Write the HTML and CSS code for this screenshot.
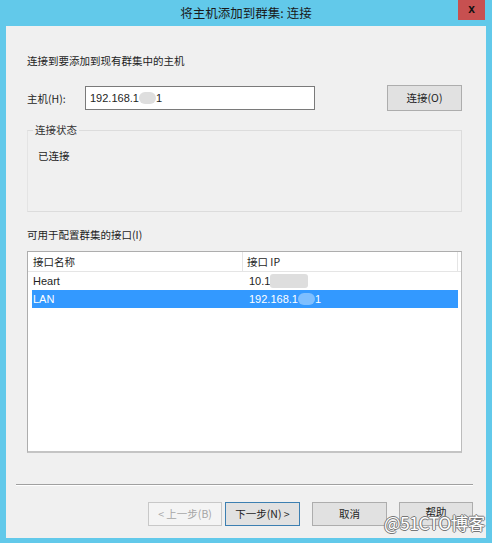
FILE: index.html
```html
<!DOCTYPE html>
<html lang="zh-CN">
<head>
<meta charset="UTF-8">
<title>将主机添加到群集: 连接</title>
<link rel="stylesheet" href="styles.css">
</head>
<body>
    <div class="window">
        <div class="title-bar">
            <div class="title">将主机添加到群集: 连接</div>
            <div class="close-btn">x</div>
        </div>
        <div class="client">
            <div class="content">
                <div class="intro">连接到要添加到现有群集中的主机</div>
                <div class="host-row">
                    <div class="host-label">主机(H):</div>
                    <div class="text-box">192.168.1<span class="blur"></span>1</div>
                    <div class="btn connect-btn">连接(O)</div>
                </div>
                <div class="group-box">
                    <div class="group-title">连接状态</div>
                    <div class="group-text">已连接</div>
                </div>
                <div class="list-label">可用于配置群集的接口(I)</div>
                <div class="list-view">
                    <div class="list-header">
                        <div class="col col-name">接口名称</div>
                        <div class="col col-ip">接口 IP</div>
                    </div>
                    <div class="list-row">
                        <div class="cell-name">Heart</div>
                        <div class="cell-ip">10.1<span class="blur wide"></span></div>
                    </div>
                    <div class="list-row selected">
                        <div class="cell-name">LAN</div>
                        <div class="cell-ip">192.168.1<span class="blur"></span>1</div>
                    </div>
                </div>
            </div>
            <div class="separator"></div>
            <div class="button-row">
                <div class="btn disabled">&lt; 上一步(B)</div>
                <div class="btn default-btn">下一步(N) &gt;</div>
                <div class="btn cancel-btn">取消</div>
                <div class="btn help-btn">帮助</div>
            </div>
        </div>
        <div class="watermark">@51CTO博客</div>
    </div>
</body>
</html>
```
FILE: styles.css
```css
body {
    margin: 0;
    font-family: "Noto Sans CJK SC", "Liberation Sans", sans-serif;
    font-size: 10.5px;
    color: #1e1e1e;
}
.window {
    position: relative;
    width: 492px;
    height: 543px;
    background-color: #62c9ea;
    padding: 0 6px;
    box-sizing: border-box;
}
.title-bar {
    height: 26px;
    display: flex;
    justify-content: center;
    align-items: center;
    position: relative;
}
.title {
    font-size: 12.5px;
    color: #1a1a1a;
    margin-top: -1px;
}
.close-btn {
    position: absolute;
    right: 1px;
    top: 0;
    width: 27px;
    height: 20px;
    background-color: #c75050;
    color: #111;
    font-family: "Liberation Sans", sans-serif;
    font-weight: bold;
    font-size: 12px;
    line-height: 18px;
    text-align: center;
}
.client {
    background-color: #f0f0f0;
    height: 512px;
    overflow: hidden;
}
.content {
    padding: 0 24px 0 21px;
}
.intro {
    margin-top: 28px;
    line-height: 14px;
}
.host-row {
    display: flex;
    align-items: center;
    margin-top: 17px;
    height: 26px;
}
.host-label {
    width: 58px;
}
.text-box {
    width: 230px;
    height: 24px;
    box-sizing: border-box;
    border: 1px solid #7a7a7a;
    background-color: #fff;
    padding-left: 4px;
    line-height: 22px;
    font-family: "Liberation Sans", sans-serif;
    font-size: 11px;
}
.blur {
    display: inline-block;
    width: 17px;
    height: 12px;
    border-radius: 6px;
    background-color: #dedede;
    vertical-align: -2px;
}
.blur.wide {
    width: 38px;
    border-radius: 3px;
    height: 14px;
    vertical-align: -3px;
}
.btn {
    height: 24px;
    box-sizing: border-box;
    border: 1px solid #adadad;
    background-color: #e1e1e1;
    text-align: center;
    line-height: 22px;
}
.connect-btn {
    width: 75px;
    height: 26px;
    line-height: 24px;
    margin-left: auto;
}
.group-box {
    margin-top: 19px;
    height: 82px;
    box-sizing: border-box;
    border: 1px solid #dcdcdc;
    border-left-color: #e4e4e4;
    padding-left: 10px;
}
.group-title {
    display: table;
    margin: -8px 0 0 -5px;
    padding: 0 2px;
    background-color: #f0f0f0;
    line-height: 14px;
    color: #333;
}
.group-text {
    margin-top: 12px;
    line-height: 14px;
}
.list-label {
    margin-top: 16px;
    line-height: 14px;
}
.list-view {
    margin-top: 9px;
    height: 202px;
    box-sizing: border-box;
    border: 1px solid #adadad;
    border-right-color: #bcbcbc;
    border-bottom: 2px solid #c4c4c4;
    background-color: #fff;
}
.list-header {
    display: flex;
    height: 19px;
    border-bottom: 1px solid #e5e5e5;
    line-height: 19px;
}
.col {
    box-sizing: border-box;
    border-right: 1px solid #e5e5e5;
    padding-left: 5px;
}
.col-name {
    width: 215px;
}
.col-ip {
    width: 215px;
    padding-left: 4px;
}
.list-row {
    display: flex;
    margin-left: 4px;
    width: 426px;
    height: 18px;
    line-height: 18px;
    font-family: "Liberation Sans", sans-serif;
    font-size: 11px;
}
.cell-name {
    width: 216px;
    padding-left: 1px;
}
.list-row.selected {
    background-color: #3399ff;
    color: #fff;
}
.list-row.selected .blur {
    background-color: #7ebfff;
}
.separator {
    margin: 31px 13px 0 10px;
    height: 1px;
    background-color: #a0a0a0;
    border-bottom: 1px solid #fff;
}
.button-row {
    display: flex;
    margin-top: 16px;
    padding-left: 142px;
}
.btn.disabled {
    width: 74px;
    background-color: #f4f4f4;
    border-color: #c8c8c8;
    color: #a6a6a6;
}
.default-btn {
    width: 75px;
    margin-left: 3px;
    border-color: #3c7fb1;
}
.cancel-btn {
    width: 75px;
    margin-left: 12px;
}
.help-btn {
    width: 74px;
    margin-left: 12px;
    line-height: 18px;
}
.watermark {
    position: absolute;
    left: 384px;
    top: 512px;
    font-family: "Noto Sans CJK SC", sans-serif;
    font-size: 17.5px;
    line-height: 22px;
    color: #fff;
    text-shadow: -1px 0 #777, 1px 0 #777, 0 -1px #777, 0 1px #777;
    letter-spacing: -0.5px;
}
```
